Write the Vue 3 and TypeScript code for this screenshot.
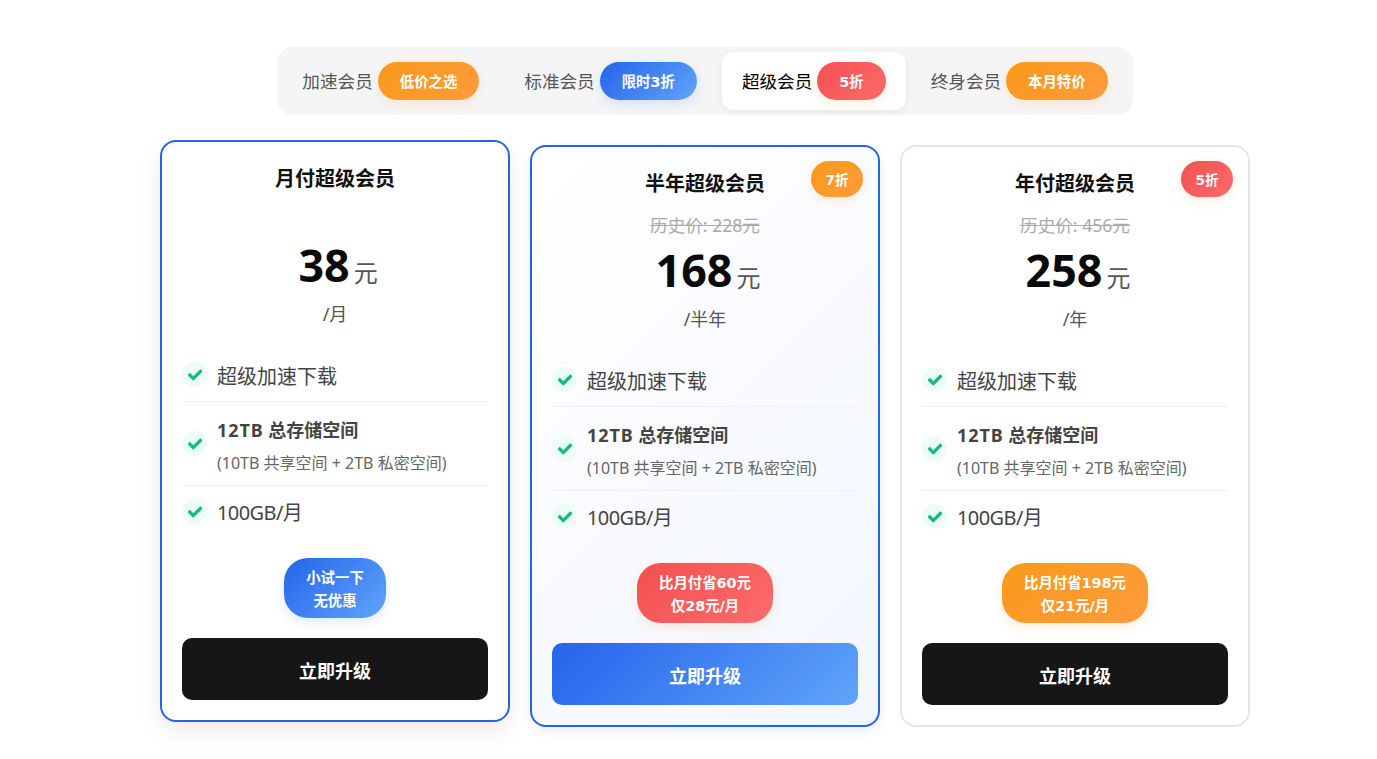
<script setup lang="ts">
import { ref } from 'vue'

type Tone = 'orange' | 'blue' | 'red'

interface Tab {
  label: string
  badge: string
  tone: Tone
}

interface Plan {
  title: string
  history?: string
  price: string
  period: string
  corner?: { text: string; tone: Tone }
  pill: { lines: string[]; tone: Tone }
  variant: 'raised' | 'featured' | 'plain'
  blueButton?: boolean
}

const tabs: Tab[] = [
  { label: '加速会员', badge: '低价之选', tone: 'orange' },
  { label: '标准会员', badge: '限时3折', tone: 'blue' },
  { label: '超级会员', badge: '5折', tone: 'red' },
  { label: '终身会员', badge: '本月特价', tone: 'orange' }
]

const activeTab = ref(2)

const plans: Plan[] = [
  {
    title: '月付超级会员',
    price: '38',
    period: '/月',
    pill: { lines: ['小试一下', '无优惠'], tone: 'blue' },
    variant: 'raised'
  },
  {
    title: '半年超级会员',
    history: '历史价: 228元',
    price: '168',
    period: '/半年',
    corner: { text: '7折', tone: 'orange' },
    pill: { lines: ['比月付省60元', '仅28元/月'], tone: 'red' },
    variant: 'featured',
    blueButton: true
  },
  {
    title: '年付超级会员',
    history: '历史价: 456元',
    price: '258',
    period: '/年',
    corner: { text: '5折', tone: 'red' },
    pill: { lines: ['比月付省198元', '仅21元/月'], tone: 'orange' },
    variant: 'plain'
  }
]

const checkPath =
  'M173.898 439.404l-166.4-166.4c-9.997-9.997-9.997-26.206 0-36.204l36.203-36.204c9.997-9.998 26.207-9.998 36.204 0L192 312.69 432.095 72.596c9.997-9.997 26.207-9.997 36.204 0l36.203 36.204c9.997 9.997 9.997 26.206 0 36.204l-294.4 294.401c-9.998 9.997-26.207 9.997-36.204-.001z'
</script>

<template>
  <div class="page">
    <div class="tabs">
      <button
        v-for="(tab, i) in tabs"
        :key="tab.label"
        type="button"
        class="tab"
        :class="{ 'tab--active': i === activeTab }"
        @click="activeTab = i"
      >
        <span class="tab__label">{{ tab.label }}</span>
        <span class="tab__badge" :class="`tone-${tab.tone}`">{{ tab.badge }}</span>
      </button>
    </div>

    <div class="plans">
      <section v-for="plan in plans" :key="plan.title" class="card" :class="`card--${plan.variant}`">
        <span v-if="plan.corner" class="card__corner" :class="`tone-${plan.corner.tone}`">{{ plan.corner.text }}</span>
        <h2 class="card__title">{{ plan.title }}</h2>
        <div class="card__history">
          <s v-if="plan.history">{{ plan.history }}</s>
        </div>
        <div class="card__price">
          <strong>{{ plan.price }}</strong>
          <span>元</span>
        </div>
        <div class="card__period">{{ plan.period }}</div>

        <ul class="features">
          <li class="feature">
            <span class="check">
              <svg viewBox="0 0 512 512" width="14" height="14"><path :d="checkPath" /></svg>
            </span>
            <span class="feature__text">超级加速下载</span>
          </li>
          <li class="feature feature--tall">
            <span class="check">
              <svg viewBox="0 0 512 512" width="14" height="14"><path :d="checkPath" /></svg>
            </span>
            <div class="feature__stack">
              <div class="feature__main"><span class="feature__size">12TB</span> 总存储空间</div>
              <div class="feature__sub">(10TB 共享空间 + 2TB 私密空间)</div>
            </div>
          </li>
          <li class="feature">
            <span class="check">
              <svg viewBox="0 0 512 512" width="14" height="14"><path :d="checkPath" /></svg>
            </span>
            <span class="feature__num">100GB/月</span>
          </li>
        </ul>

        <div class="card__pill" :class="`tone-${plan.pill.tone}`">
          <div v-for="line in plan.pill.lines" :key="line">{{ line }}</div>
        </div>

        <button type="button" class="card__btn" :class="{ 'card__btn--blue': plan.blueButton }">立即升级</button>
      </section>
    </div>
  </div>
</template>

<style>
body {
  background: #fff;
}
</style>

<style scoped>
.page {
  display: flex;
  flex-direction: column;
  align-items: center;
  padding: 47px 0 0 33px;
  font-family: 'Noto Sans', 'Noto Sans CJK SC', sans-serif;
  height: 759px;
  box-sizing: border-box;
  overflow: hidden;
}

.tabs {
  display: flex;
  gap: 5px;
  padding: 5px;
  background: #f5f5f5;
  border-radius: 16px;
}

.tab {
  display: flex;
  align-items: center;
  gap: 5px;
  height: 58px;
  padding: 0 20px;
  border: 0;
  border-radius: 12px;
  background: transparent;
  color: #555;
  font: inherit;
  font-size: 17.6px;
  cursor: pointer;
}

.tab__label {
  margin-bottom: 2px;
}

.tab--active {
  background: #fff;
  color: #000;
  box-shadow: 0 2px 8px rgba(0, 0, 0, 0.06);
}

.tab__badge {
  display: flex;
  align-items: center;
  box-sizing: border-box;
  height: 38px;
  padding: 0 22px 2px;
  border-radius: 19px;
  color: #fff;
  font-family: 'DejaVu Sans', 'Noto Sans CJK SC', sans-serif;
  font-size: 14.4px;
  font-weight: 700;
}

.tone-orange {
  background: linear-gradient(135deg, #f99a1a, #ff9a3c);
  box-shadow: 0 4px 12px rgba(249, 154, 26, 0.15);
}

.tone-blue {
  background: linear-gradient(135deg, #2563eb, #60a5fa);
  box-shadow: 0 4px 12px rgba(37, 99, 235, 0.15);
}

.tone-red {
  background: linear-gradient(135deg, #f25050, #ff6b6b);
  box-shadow: 0 4px 12px rgba(249, 154, 26, 0.15);
}

.plans {
  display: flex;
  gap: 20px;
  margin-top: 30px;
}

.card {
  position: relative;
  display: flex;
  flex-direction: column;
  width: 350px;
  height: 582px;
  box-sizing: border-box;
  padding: 20px;
  border: 2px solid #e8e6e4;
  border-radius: 16px;
  background: #fff;
}

.card--raised {
  border-color: #2563eb;
  transform: translateY(-5px);
  box-shadow: 0 10px 25px rgba(0, 0, 0, 0.08);
}

.card--featured {
  border-color: #2563eb;
  background: linear-gradient(135deg, #fff, #f2f6ff);
  box-shadow: 0 4px 12px rgba(0, 0, 0, 0.08);
}

.card__corner {
  position: absolute;
  top: 14px;
  right: 15px;
  display: flex;
  align-items: center;
  justify-content: center;
  width: 52px;
  height: 36px;
  border-radius: 18px;
  color: #fff;
  font-family: 'DejaVu Sans', 'Noto Sans CJK SC', sans-serif;
  font-size: 13.6px;
  font-weight: 700;
}

.card__title {
  margin: 2px 0 0;
  height: 30px;
  line-height: 30px;
  text-align: center;
  color: #111;
  font-size: 20px;
  font-weight: 700;
}

.card__history {
  height: 26px;
  margin-top: 13px;
  line-height: 26px;
  text-align: center;
  color: #aaa;
  font-size: 17.6px;
}

.card__price {
  display: flex;
  align-items: baseline;
  justify-content: center;
  gap: 4px;
  height: 58px;
  margin-top: 3px;
  padding-left: 6px;
  line-height: 58px;
}

.card__price strong {
  color: #0a0a0a;
  font-size: 44.8px;
  font-weight: 700;
}

.card__price span {
  color: #555;
  font-size: 24px;
}

.card__period {
  height: 28px;
  margin-top: 6px;
  line-height: 28px;
  text-align: center;
  color: #555;
  font-size: 18px;
}

.features {
  margin: 20px 0 0;
  padding: 0;
  list-style: none;
}

.feature {
  display: flex;
  align-items: center;
  gap: 10px;
  height: 54px;
  color: #444;
  font-size: 20px;
  border-bottom: 1px solid #f0f0f0;
  box-sizing: border-box;
}

.feature--tall {
  height: 84px;
}

.feature:last-child {
  padding-bottom: 3px;
  border-bottom: 0;
}

.feature__text {
  padding-top: 2px;
}

.feature__stack {
  padding-top: 4px;
}

.feature__num {
  letter-spacing: -0.6px;
}

.feature__size {
  letter-spacing: 0.9px;
}

.check {
  display: flex;
  align-items: center;
  justify-content: center;
  flex: none;
  width: 25px;
  height: 25px;
  border-radius: 50%;
  background: #ecfdf5;
}

.check svg {
  fill: #10b981;
  stroke: #10b981;
  stroke-width: 24;
}

.feature__main {
  line-height: 26px;
  font-size: 18px;
  font-weight: 700;
}

.feature__sub {
  margin-top: 9px;
  line-height: 22px;
  color: #666;
  font-size: 16px;
}

.card__pill {
  align-self: center;
  margin-top: 18px;
  padding: 9px 22px 5px;
  border-radius: 24px;
  color: #fff;
  text-align: center;
  font-family: 'DejaVu Sans', 'Noto Sans CJK SC', sans-serif;
  font-size: 14.4px;
  font-weight: 700;
  line-height: 23px;
}

.card__btn {
  margin-top: 20px;
  height: 62px;
  padding: 2px 0 0;
  border: 0;
  border-radius: 10px;
  background: #161616;
  color: #fff;
  font: inherit;
  font-size: 18px;
  font-weight: 700;
  cursor: pointer;
}

.card__btn--blue {
  background: linear-gradient(135deg, #2563eb, #60a5fa);
}
</style>
